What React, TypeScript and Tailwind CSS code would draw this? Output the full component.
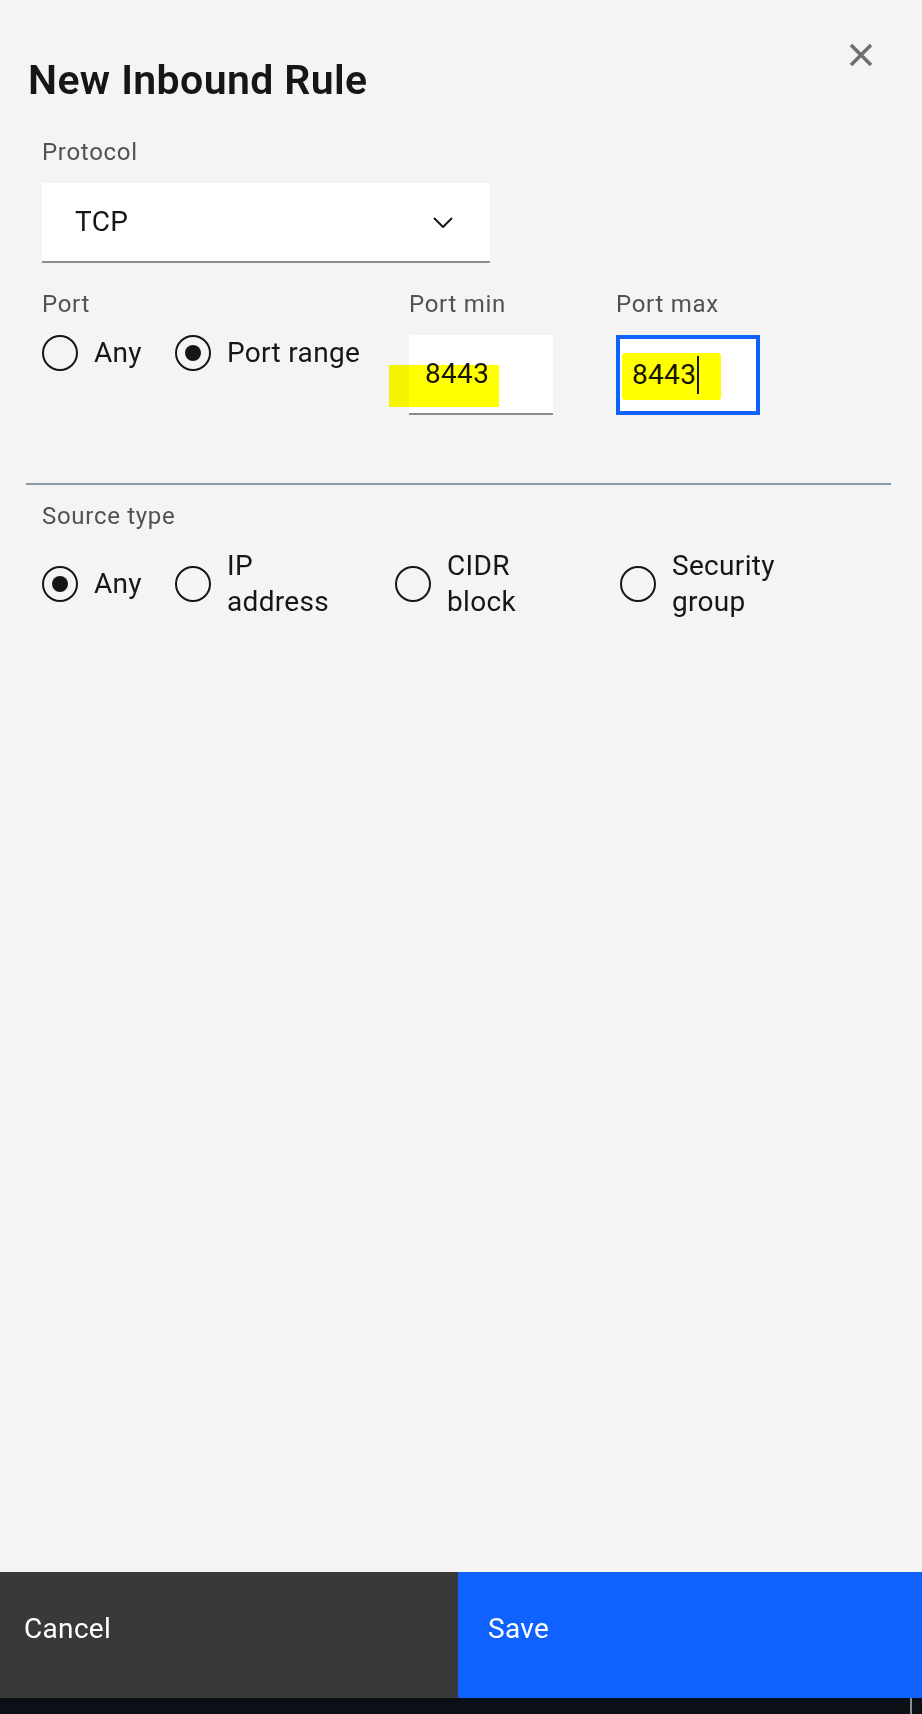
import React, { useState } from 'react';

type RadioProps = {
  label: string;
  checked: boolean;
  onSelect: () => void;
  className?: string;
};

const Radio: React.FC<RadioProps> = ({ label, checked, onSelect, className = '' }) => (
  <button type="button" onClick={onSelect} className={`flex items-center text-left ${className}`}>
    <span className="flex h-[36px] w-[36px] shrink-0 items-center justify-center rounded-full border-2 border-[#161616]">
      {checked && <span className="h-[16px] w-[16px] rounded-full bg-[#161616]" />}
    </span>
    <span className="ml-[16px] whitespace-pre-line text-[28px] leading-[36px] tracking-[0.32px] text-[#161616]">{label}</span>
  </button>
);

const App: React.FC = () => {
  const [portMode, setPortMode] = useState('range');
  const [source, setSource] = useState('any');

  const sources = [
    { id: 'any', label: 'Any', width: 'w-[133px]' },
    { id: 'ip', label: 'IP\naddress', width: 'w-[220px]' },
    { id: 'cidr', label: 'CIDR\nblock', width: 'w-[225px]' },
    { id: 'sg', label: 'Security\ngroup', width: 'w-[200px]' },
  ];

  return (
    <div className="flex min-h-[1714px] w-[922px] flex-col bg-[#f4f4f4] font-['Roboto',sans-serif]">
      <div className="flex-1">
        {/* Header */}
        <div className="flex items-start justify-between pl-[28px] pr-[49px] pt-[43px]">
          <h1 className="mt-[13px] text-[41px] font-semibold leading-[48px] tracking-[0.4px] text-[#161616]">New Inbound Rule</h1>
          <button type="button" aria-label="Close">
            <svg width="24" height="24" viewBox="0 0 24 24" fill="none" stroke="#6f6f6f" strokeWidth="3.5">
              <path d="M2 2 L22 22 M22 2 L2 22" />
            </svg>
          </button>
        </div>

        {/* Protocol */}
        <div className="pl-[42px]">
          <p className="mt-[32px] text-[24px] leading-[32px] tracking-[0.7px] text-[#525252]">Protocol</p>
          <div className="mt-[15px] flex h-[80px] w-[448px] items-center justify-between border-b-2 border-[#8d8d8d] bg-white pl-[33px] pr-[37px]">
            <span className="text-[28px] leading-[36px] tracking-[0.32px] text-[#161616]">TCP</span>
            <svg width="20" height="11" viewBox="0 0 20 11" fill="none" stroke="#161616" strokeWidth="2">
              <path d="M1 1 L10 10 L19 1" />
            </svg>
          </div>

          {/* Port */}
          <div className="mt-[25px] flex items-start">
            <div className="w-[367px]">
              <p className="text-[24px] leading-[32px] tracking-[0.7px] text-[#525252]">Port</p>
              <div className="mt-[15px] flex">
                <Radio label="Any" checked={portMode === 'any'} onSelect={() => setPortMode('any')} className="w-[133px]" />
                <Radio label="Port range" checked={portMode === 'range'} onSelect={() => setPortMode('range')} />
              </div>
            </div>
            <div className="w-[144px]">
              <p className="text-[24px] leading-[32px] tracking-[0.7px] text-[#525252]">Port min</p>
              <div className="relative mt-[15px] flex h-[80px] items-center border-b-2 border-[#8d8d8d] bg-white pl-[16px]">
                <span className="text-[28px] leading-[36px] tracking-[0.32px] text-[#161616]">8443</span>
                <span className="absolute left-[-20px] top-[30px] h-[42px] w-[110px] bg-[#ffff00] mix-blend-multiply" />
              </div>
            </div>
            <div className="ml-[63px] w-[144px]">
              <p className="text-[24px] leading-[32px] tracking-[0.7px] text-[#525252]">Port max</p>
              <div className="relative mt-[15px] flex h-[80px] items-center border-4 border-[#0f62fe] bg-white pl-[12px]">
                <span className="text-[28px] leading-[36px] tracking-[0.32px] text-[#161616]">8443</span>
                <span className="ml-[1px] h-[38px] w-[2px] bg-[#161616]" />
                <span className="absolute left-[2px] top-[14px] h-[47px] w-[99px] rounded-[3px] bg-[#ffff00] mix-blend-multiply" />
              </div>
            </div>
          </div>
        </div>

        <div className="ml-[26px] mr-[31px] mt-[68px] h-[2px] bg-[#8a99a6]" />

        {/* Source type */}
        <div className="pl-[42px]">
          <p className="mt-[15px] text-[24px] leading-[32px] tracking-[0.7px] text-[#525252]">Source type</p>
          <div className="mt-[16px] flex items-center">
            {sources.map((s) => (
              <Radio key={s.id} label={s.label} checked={source === s.id} onSelect={() => setSource(s.id)} className={s.width} />
            ))}
          </div>
        </div>
      </div>

      {/* Footer */}
      <div className="flex h-[126px]">
        <button type="button" className="flex w-[458px] items-start bg-[#393939] pl-[24px] pt-[39px] text-[28px] leading-[36px] tracking-[0.32px] text-white">
          Cancel
        </button>
        <button type="button" className="flex flex-1 items-start bg-[#0f62fe] pl-[30px] pt-[39px] text-[28px] leading-[36px] tracking-[0.32px] text-white">
          Save
        </button>
      </div>
      <div className="flex h-[16px] justify-end bg-[#0b0f16] pr-[10px]">
        <div className="w-[2px] bg-[#8d8d8d]" />
      </div>
    </div>
  );
};

export default App;
